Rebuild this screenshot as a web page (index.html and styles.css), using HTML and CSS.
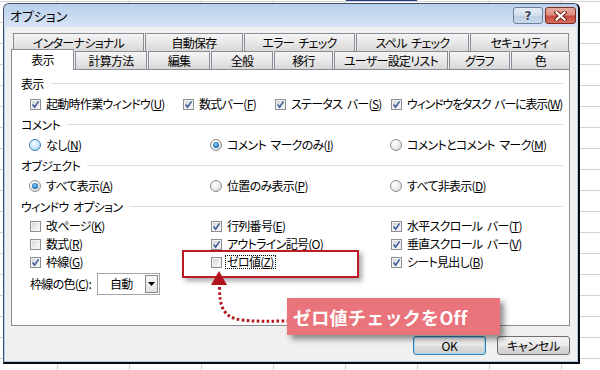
FILE: index.html
```html
<!DOCTYPE html>
<html lang="ja">
<head>
<meta charset="utf-8">
<title>オプション</title>
<link rel="stylesheet" href="styles.css">
</head>
<body>
<div class="sel-cell"></div>
<div class="dialog">
  <div class="titlebar">
    <span class="title">オプション</span>
    <div class="cap-btns">
      <span class="cap-btn help">?</span>
      <span class="cap-btn close"><svg width="13" height="10" viewBox="0 0 13 10"><path d="M2.5 1.5 L10.5 8.5 M10.5 1.5 L2.5 8.5" stroke="#6b1d16" stroke-width="4" stroke-linecap="square" fill="none"/><path d="M2.5 1.5 L10.5 8.5 M10.5 1.5 L2.5 8.5" stroke="#fff" stroke-width="2.2" stroke-linecap="square" fill="none"/></svg></span>
    </div>
  </div>
  <div class="client">
    <div class="tabrow back">
      <span class="tab">インターナショナル</span>
      <span class="tab">自動保存</span>
      <span class="tab">エラー チェック</span>
      <span class="tab">スペル チェック</span>
      <span class="tab">セキュリティ</span>
    </div>
    <div class="tabrow front">
      <span class="tab sel">表示</span>
      <span class="tab">計算方法</span>
      <span class="tab">編集</span>
      <span class="tab">全般</span>
      <span class="tab">移行</span>
      <span class="tab">ユーザー設定リスト</span>
      <span class="tab">グラフ</span>
      <span class="tab">色</span>
    </div>
    <div class="panel">
      <div class="group-head"><span>表示</span></div>
      <div class="row row-4">
        <span class="opt"><span class="cb"><svg class="chk" width="9" height="9" viewBox="0 0 9 9"><path d="M1.6 4.6 L3.6 7.2 L7.6 1.4"/></svg></span><span>起動時作業ウィンドウ(<u>U</u>)</span></span>
        <span class="opt"><span class="cb"><svg class="chk" width="9" height="9" viewBox="0 0 9 9"><path d="M1.6 4.6 L3.6 7.2 L7.6 1.4"/></svg></span><span>数式バー(<u>F</u>)</span></span>
        <span class="opt"><span class="cb"><svg class="chk" width="9" height="9" viewBox="0 0 9 9"><path d="M1.6 4.6 L3.6 7.2 L7.6 1.4"/></svg></span><span>ステータス バー(<u>S</u>)</span></span>
        <span class="opt"><span class="cb"><svg class="chk" width="9" height="9" viewBox="0 0 9 9"><path d="M1.6 4.6 L3.6 7.2 L7.6 1.4"/></svg></span><span class="narrow">ウィンドウをタスク バーに表示(<u>W</u>)</span></span>
      </div>
      <div class="group-head"><span>コメント</span></div>
      <div class="row row-3">
        <span class="opt"><span class="rb hot"></span><span>なし(<u>N</u>)</span></span>
        <span class="opt"><span class="rb on"></span><span>コメント マークのみ(<u>I</u>)</span></span>
        <span class="opt"><span class="rb"></span><span>コメントとコメント マーク(<u>M</u>)</span></span>
      </div>
      <div class="group-head"><span>オブジェクト</span></div>
      <div class="row row-3">
        <span class="opt"><span class="rb on"></span><span>すべて表示(<u>A</u>)</span></span>
        <span class="opt"><span class="rb"></span><span>位置のみ表示(<u>P</u>)</span></span>
        <span class="opt"><span class="rb"></span><span>すべて非表示(<u>D</u>)</span></span>
      </div>
      <div class="group-head"><span>ウィンドウ オプション</span></div>
      <div class="grid-3">
        <span class="opt"><span class="cb"></span><span>改ページ(<u>K</u>)</span></span>
        <span class="opt"><span class="cb"><svg class="chk" width="9" height="9" viewBox="0 0 9 9"><path d="M1.6 4.6 L3.6 7.2 L7.6 1.4"/></svg></span><span>行列番号(<u>E</u>)</span></span>
        <span class="opt"><span class="cb"><svg class="chk" width="9" height="9" viewBox="0 0 9 9"><path d="M1.6 4.6 L3.6 7.2 L7.6 1.4"/></svg></span><span>水平スクロール バー(<u>T</u>)</span></span>
        <span class="opt"><span class="cb"></span><span>数式(<u>R</u>)</span></span>
        <span class="opt"><span class="cb"><svg class="chk" width="9" height="9" viewBox="0 0 9 9"><path d="M1.6 4.6 L3.6 7.2 L7.6 1.4"/></svg></span><span>アウトライン記号(<u>O</u>)</span></span>
        <span class="opt"><span class="cb"><svg class="chk" width="9" height="9" viewBox="0 0 9 9"><path d="M1.6 4.6 L3.6 7.2 L7.6 1.4"/></svg></span><span>垂直スクロール バー(<u>V</u>)</span></span>
        <span class="opt"><span class="cb"><svg class="chk" width="9" height="9" viewBox="0 0 9 9"><path d="M1.6 4.6 L3.6 7.2 L7.6 1.4"/></svg></span><span>枠線(<u>G</u>)</span></span>
        <span class="opt"><span class="cb"></span><span class="focus">ゼロ値(<u>Z</u>)</span></span>
        <span class="opt"><span class="cb"><svg class="chk" width="9" height="9" viewBox="0 0 9 9"><path d="M1.6 4.6 L3.6 7.2 L7.6 1.4"/></svg></span><span>シート見出し(<u>B</u>)</span></span>
      </div>
      <div class="combo-row">
        <span class="combo-label">枠線の色(<u>C</u>):</span>
        <span class="combo"><span class="combo-val">自動</span><span class="combo-btn"><svg width="7" height="4" viewBox="0 0 7 4"><polygon points="0,0 7,0 3.5,4" fill="#000"/></svg></span></span>
      </div>
    </div>
    <div class="btn-row">
      <button class="btn default">OK</button>
      <button class="btn">キャンセル</button>
    </div>
  </div>
</div>
<div class="hl"></div>
<svg class="arrow" width="100" height="60" viewBox="0 0 100 60">
  <path d="M19.5 19 C19.5 38 23 50 42 52 C58 54 72 53 88 53" fill="none" stroke="#b3141c" stroke-width="3" stroke-dasharray="2.6 2.4"/>
  <polygon points="19,3 11,17 27,17" fill="#b3141c"/>
</svg>
<div class="callout">ゼロ値チェックをOff</div>
</body>
</html>
```
FILE: styles.css
```css
html, body { margin: 0; padding: 0; }
body {
  box-sizing: border-box;
  width: 600px;
  height: 370px;
  overflow: hidden;
  position: relative;
  padding: 3px 0 0 3px;
  font-family: "Noto Sans CJK JP", "Noto Sans", sans-serif;
  font-size: 12px;
  line-height: 1;
  letter-spacing: -0.7px;
  word-spacing: 2.5px;
  color: #000;
  font-feature-settings: "palt";
  background-color: #fff;
  background-image:
    linear-gradient(to bottom, #d2d2d2 0, #d2d2d2 1px, transparent 1px),
    linear-gradient(to right, #d2d2d2 0, #d2d2d2 1px, transparent 1px);
  background-size: 100% 21px, 72px 100%;
  background-position: 0 1px, 57px 0;
}
.sel-cell {
  position: absolute;
  left: 346px; top: 0;
  width: 71px; height: 1px;
  background: #2a3a8c;
}
.dialog {
  box-sizing: border-box;
  width: 577px;
  height: 361px;
  border: 1px solid #3f4e60;
  border-right: 2px solid #0a0a0a;
  border-bottom: 2px solid #0a0a0a;
  border-radius: 6px 6px 0 0;
  background: #a8cdee;
  display: flex;
  flex-direction: column;
  overflow: hidden;
}
.titlebar {
  height: 23px;
  flex: none;
  display: flex;
  align-items: center;
  justify-content: space-between;
  padding: 0 2px 0 6px;
  background: linear-gradient(#b9d0eb, #c6d9ef 45%, #d6e4f4);
}
.title { font-size: 13px; letter-spacing: 0; }
.cap-btns { display: flex; gap: 2px; align-items: center; }
.cap-btn {
  box-sizing: border-box;
  height: 17px;
  border-radius: 3px;
  display: flex;
  align-items: center;
  justify-content: center;
}
.help {
  width: 30px;
  border: 1px solid #6c7f99;
  background: linear-gradient(#e6eef8, #d2deed 50%, #bdcee4 51%, #c9d8eb);
  font: bold 12px "DejaVu Sans", sans-serif;
  letter-spacing: 0;
  color: #34435a;
  text-shadow: 0 0 1px #fff, 0 0 2px #fff;
}
.close {
  width: 31px;
  border: 1px solid #7d2b23;
  background: linear-gradient(#eaaca2, #dc8a7e 48%, #c7493c 52%, #d4705f);
}
.client {
  flex: 1;
  margin: 0 1px 1px;
  background: #f0f0f0;
  padding: 6px 0 0 6px;
  display: flex;
  flex-direction: column;
}
.tabrow {
  display: flex;
  gap: 1px;
  height: 18px;
  flex: none;
  align-items: flex-start;
}
.tabrow.back { margin-left: 2px; }
.tab {
  box-sizing: border-box;
  height: 18px;
  border: 1px solid #898c95;
  border-bottom: 0;
  background: linear-gradient(#f5f5f5, #e6e6e6 55%, #d8d8d8);
  display: flex;
  align-items: center;
  justify-content: center;
  white-space: nowrap;
  flex: none;
}
.back .tab:nth-child(1) { width: 131px; }
.back .tab:nth-child(2) { width: 98px; }
.back .tab:nth-child(3) { width: 111px; }
.back .tab:nth-child(4) { width: 113px; }
.back .tab:nth-child(5) { width: 99px; }
.front .tab:nth-child(1) { width: 63px; }
.front .tab:nth-child(2) { width: 72px; }
.front .tab:nth-child(3) { width: 62px; }
.front .tab:nth-child(4) { width: 62px; }
.front .tab:nth-child(5) { width: 59px; }
.front .tab:nth-child(6) { width: 114px; }
.front .tab:nth-child(7) { width: 61px; }
.front .tab:nth-child(8) { width: 59px; }
.tab.sel {
  height: 21px;
  margin-top: -2px;
  background: #fff;
  position: relative;
  z-index: 1;
}
.panel {
  box-sizing: border-box;
  width: 559px;
  height: 257px;
  flex: none;
  border: 1px solid #898c95;
  background: #fff;
  padding: 3px 6px 0 9px;
}
.group-head {
  height: 21px;
  display: flex;
  align-items: center;
  gap: 7px;
}
.group-head::after {
  content: "";
  flex: 1;
  height: 1px;
  background: #d5dfe5;
}
.row {
  display: grid;
  height: 20px;
  align-items: center;
  padding-left: 9px;
}
.row-4 { grid-template-columns: 153px 92px 116px auto; }
.row-3 { grid-template-columns: 181px 180px auto; }
.grid-3 {
  display: grid;
  grid-template-columns: 181px 180px auto;
  grid-auto-rows: 18px;
  align-items: center;
  padding-left: 9px;
}
.opt {
  display: flex;
  align-items: center;
  gap: 5px;
  white-space: nowrap;
}
.narrow { letter-spacing: -1.2px; }
u { text-underline-offset: 1px; }
.cb {
  box-sizing: border-box;
  width: 11px;
  height: 11px;
  flex: none;
  border: 1px solid #8e8f8f;
  background: linear-gradient(135deg, #cdcdcd, #ececec 55%, #fbfbfb);
  box-shadow: inset 0 0 0 1px #f2f2f2;
  display: flex;
  align-items: center;
  justify-content: center;
}
.chk path {
  fill: none;
  stroke: #3d5b9c;
  stroke-width: 1.6;
}
.rb {
  box-sizing: border-box;
  width: 12px;
  height: 12px;
  flex: none;
  margin-left: -1px;
  border-radius: 50%;
  border: 1px solid #8e8f8f;
  background: radial-gradient(circle at 35% 30%, #fff 0, #f2f2f2 40%, #cdcdcd 100%);
  display: flex;
  align-items: center;
  justify-content: center;
}
.rb.on::after {
  content: "";
  width: 6px;
  height: 6px;
  border-radius: 50%;
  background: radial-gradient(circle at 45% 40%, #8fd0f6 0, #3a8bcc 45%, #15497f 100%);
}
.rb.hot {
  border-color: #3c7fb1;
  background: radial-gradient(circle at 40% 35%, #f4fbff 0, #c6e8fb 55%, #8ccbef 100%);
}
.focus {
  border: 1px dotted #000;
  padding: 0 1px;
  margin-left: -2px;
  line-height: 12px;
}
.combo-row {
  display: flex;
  align-items: center;
  gap: 4px;
  height: 22px;
  margin-top: 2px;
  padding-left: 9px;
}
.combo-label { width: 63px; white-space: nowrap; }
.combo {
  box-sizing: border-box;
  width: 63px;
  height: 22px;
  border: 1px solid #a5a5a5;
  background: #fff;
  display: flex;
  align-items: center;
  justify-content: space-between;
  padding: 0 1px 0 12px;
}
.combo-btn {
  box-sizing: border-box;
  width: 13px;
  height: 18px;
  border: 1px solid #8a8a8a;
  background: linear-gradient(#f8f8f8, #e2e2e2);
  display: flex;
  align-items: center;
  justify-content: center;
}
.btn-row {
  width: 559px;
  display: flex;
  justify-content: flex-end;
  gap: 11px;
  margin-top: 10px;
}
.btn {
  box-sizing: border-box;
  width: 73px;
  height: 19px;
  padding: 0;
  border: 1px solid #707070;
  border-radius: 3px;
  background: linear-gradient(#f2f2f2, #ebebeb 50%, #dddddd 51%, #cfcfcf);
  font-family: "Noto Sans CJK JP", "Noto Sans", sans-serif;
  font-size: 12px;
  font-feature-settings: "palt";
  letter-spacing: -0.3px;
  line-height: 1;
  color: #000;
}
.btn.default {
  border-color: #3c7fb1;
  box-shadow: inset 0 0 0 1px #9ad9f7;
}
.hl {
  position: absolute;
  left: 182px;
  top: 250px;
  width: 177px;
  height: 28px;
  box-sizing: border-box;
  border: 2px solid #bd1a22;
  box-shadow: 3px 3px 5px rgba(0, 0, 0, 0.35);
}
.arrow {
  position: absolute;
  left: 200px;
  top: 268px;
}
.callout {
  position: absolute;
  left: 287px;
  top: 298px;
  width: 213px;
  height: 37px;
  box-sizing: border-box;
  padding-left: 6px;
  background: #ea747b;
  color: #fff;
  font-size: 18px;
  font-weight: bold;
  letter-spacing: 0.3px;
  word-spacing: 0;
  font-feature-settings: normal;
  display: flex;
  align-items: center;
  box-shadow: 4px 4px 6px rgba(0, 0, 0, 0.45);
}
```
